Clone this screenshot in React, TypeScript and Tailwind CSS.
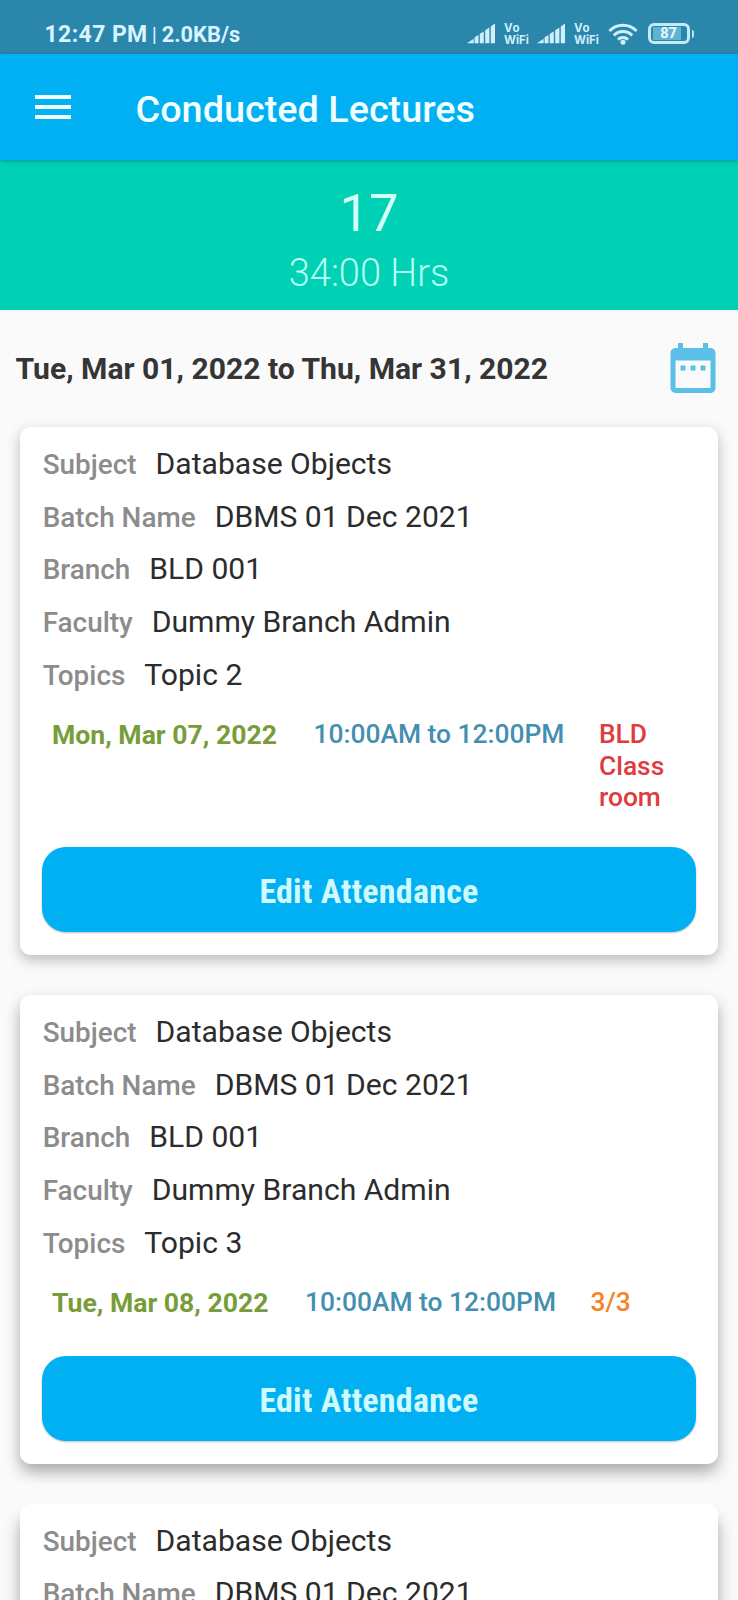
import React from "react";
import { MdDateRange } from "react-icons/md";

type Lecture = {
  subject: string;
  batch: string;
  branch: string;
  faculty: string;
  topics: string;
  date: string;
  time: string;
  room?: string;
  count?: string;
  shadow: string;
};

const common = {
  subject: "Database Objects",
  batch: "DBMS 01 Dec 2021",
  branch: "BLD 001",
  faculty: "Dummy Branch Admin",
  time: "10:00AM to 12:00PM",
};

const lectures: Lecture[] = [
  {
    ...common,
    topics: "Topic 2",
    date: "Mon, Mar 07, 2022",
    room: "BLD Class room",
    shadow: "shadow-[0_5px_14px_rgba(0,0,0,0.26)]",
  },
  {
    ...common,
    topics: "Topic 3",
    date: "Tue, Mar 08, 2022",
    count: "3/3",
    shadow: "shadow-[0_8px_15px_rgba(0,0,0,0.32)]",
  },
  {
    ...common,
    topics: "Topic 4",
    date: "Wed, Mar 09, 2022",
    count: "3/3",
    shadow: "shadow-[0_14px_16px_rgba(0,0,0,0.34)]",
  },
];

function Signal() {
  return (
    <svg width="29" height="21" viewBox="0 0 29 21" fill="currentColor">
      <path d="M0 20.2 L6.6 15.8 V20.2Z" />
      <path d="M7.6 14.2 L11.5 12 V20.2 H7.6Z" />
      <path d="M12.8 10.8 L16.8 8.4 V20.2 H12.8Z" />
      <path d="M18.2 7.2 L22.4 4.6 V20.2 H18.2Z" />
      <path d="M23.8 3.4 L28 0.6 V20.2 H23.8Z" />
    </svg>
  );
}

function VoWifi() {
  return (
    <div className="-mt-[1px] w-[25px] font-[Inter,sans-serif] text-[11.5px] leading-[12.2px] font-bold whitespace-nowrap">
      <div className="tracking-[0.6px]">Vo</div>
      <div>WiFi</div>
    </div>
  );
}

function WifiIcon() {
  return (
    <svg width="30" height="22" viewBox="0 0 30 22" fill="none" stroke="currentColor" strokeWidth="3">
      <path d="M1.4 8 A19.2 19.2 0 0 1 28.6 8" />
      <path d="M5.8 12.4 A13 13 0 0 1 24.2 12.4" />
      <path d="M10 16.6 A7.1 7.1 0 0 1 20 16.6" />
      <circle cx="15" cy="19.2" r="2.5" fill="currentColor" stroke="none" />
    </svg>
  );
}

function Battery() {
  return (
    <div className="flex items-center gap-[2px]">
      <div className="flex h-[21px] w-[42px] items-center rounded-[6px] border-[3px] border-[#c2eaf7] pl-[2px]">
        <div className="flex h-[13px] w-[28px] items-center justify-center bg-[#62b3d2] pl-[4px] text-[14.5px] leading-[13px] font-bold text-[#e6fbff]">
          87
        </div>
      </div>
      <div className="h-[8px] w-[2.5px] rounded-r-[2px] bg-[#b5e2f2]" />
    </div>
  );
}

function StatusBar() {
  return (
    <div className="flex h-[54px] shrink-0 items-start bg-[#2b86ac] pl-[44.5px] text-[#d8f4ff]">
      <div className="flex items-baseline pt-[21px] leading-[28px] font-bold whitespace-pre">
        <span className="text-[23px] tracking-[0.4px]">12:47 PM</span>
        <span className="ml-[4px] text-[21px] font-normal">|</span>
        <span className="ml-[5px] text-[21.8px]">2.0KB/s</span>
      </div>
      <div className="mt-[23px] mr-[44px] ml-auto flex items-start text-[#cdf0fb]">
        <Signal />
        <div className="ml-[8px]"><VoWifi /></div>
        <div className="ml-[8px]"><Signal /></div>
        <div className="ml-[8px]"><VoWifi /></div>
        <div className="ml-[9px]"><WifiIcon /></div>
        <div className="ml-[9.5px]"><Battery /></div>
      </div>
    </div>
  );
}

function Field({ label, value }: { label: string; value: string }) {
  return (
    <div className="flex h-[52.7px] items-baseline gap-[19px] leading-[52.7px] whitespace-nowrap">
      <span className="text-[27.9px] font-medium text-[#8c8c8c]">{label}</span>
      <span className="text-[30.1px] text-[#2c2c2c]">{value}</span>
    </div>
  );
}

function LectureCard({ lecture }: { lecture: Lecture }) {
  return (
    <div className="shrink-0 overflow-hidden p-[20px]">
      <div className={`rounded-[11px] bg-white px-[22px] pt-[11px] pb-[23px] ${lecture.shadow}`}>
        <div className="pl-[0.7px]">
          <Field label="Subject" value={lecture.subject} />
          <Field label="Batch Name" value={lecture.batch} />
          <Field label="Branch" value={lecture.branch} />
          <Field label="Faculty" value={lecture.faculty} />
          <Field label="Topics" value={lecture.topics} />
        </div>
        <div className="mt-[18px] flex min-h-[35.2px] items-start pl-[10px] text-[26.4px] leading-[31.5px] font-medium">
          <span className="text-[26.6px] font-bold whitespace-nowrap text-[#779d3a]">{lecture.date}</span>
          <span className="ml-[36.5px] whitespace-nowrap text-[#448fb0]">{lecture.time}</span>
          {lecture.room && <span className="ml-[34.5px] w-[80px] text-[#e03b3e]">{lecture.room}</span>}
          {lecture.count && <span className="ml-[34.5px] text-[#f48426]">{lecture.count}</span>}
        </div>
        <button className="mt-[33px] flex h-[85px] w-full items-center justify-center rounded-[24px] bg-[#01aff3] pt-[4px] font-['Roboto_Condensed',Roboto,sans-serif] text-[34px] font-bold tracking-[0.25px] text-[#cffaff] shadow-[0_1px_2px_rgba(0,0,0,0.25)]">
          Edit Attendance
        </button>
      </div>
    </div>
  );
}

export default function App() {
  return (
    <div className="flex h-[1600px] w-[738px] flex-col overflow-hidden bg-[#fafafa] font-[Roboto,sans-serif]">
      <StatusBar />
      <header className="relative flex h-[106px] shrink-0 items-center bg-[#01aff3] pl-[35px] shadow-[0_1px_4px_rgba(0,60,80,0.4)]">
        <button className="flex w-[35.5px] flex-col gap-[6px]" aria-label="Menu">
          <span className="h-[4px] w-full bg-[#f0ffff]" />
          <span className="h-[4px] w-full bg-[#f0ffff]" />
          <span className="h-[4px] w-full bg-[#f0ffff]" />
        </button>
        <h1 className="ml-[65px] pt-[4px] text-[37.8px] leading-[44px] font-medium text-[#f0ffff]">
          Conducted Lectures
        </h1>
      </header>
      <section className="flex h-[150px] shrink-0 flex-col items-center bg-[#00d1b5] pt-[22px]">
        <div className="text-[52.5px] leading-[62px] text-[#d2fff8]">17</div>
        <div className="mt-[7px] text-[38px] leading-[44px] font-light text-[#b4fff4]">34:00 Hrs</div>
      </section>
      <section className="flex h-[97px] shrink-0 items-center justify-between pr-[15px] pl-[15.5px]">
        <h2 className="pt-[21px] text-[30.1px] leading-[36px] font-bold text-[#353535]">
          Tue, Mar 01, 2022 to Thu, Mar 31, 2022
        </h2>
        <MdDateRange className="mt-[18px] size-[60px] text-[#5bc0e7]" />
      </section>
      {lectures.map((lecture) => (
        <LectureCard key={lecture.topics} lecture={lecture} />
      ))}
    </div>
  );
}
